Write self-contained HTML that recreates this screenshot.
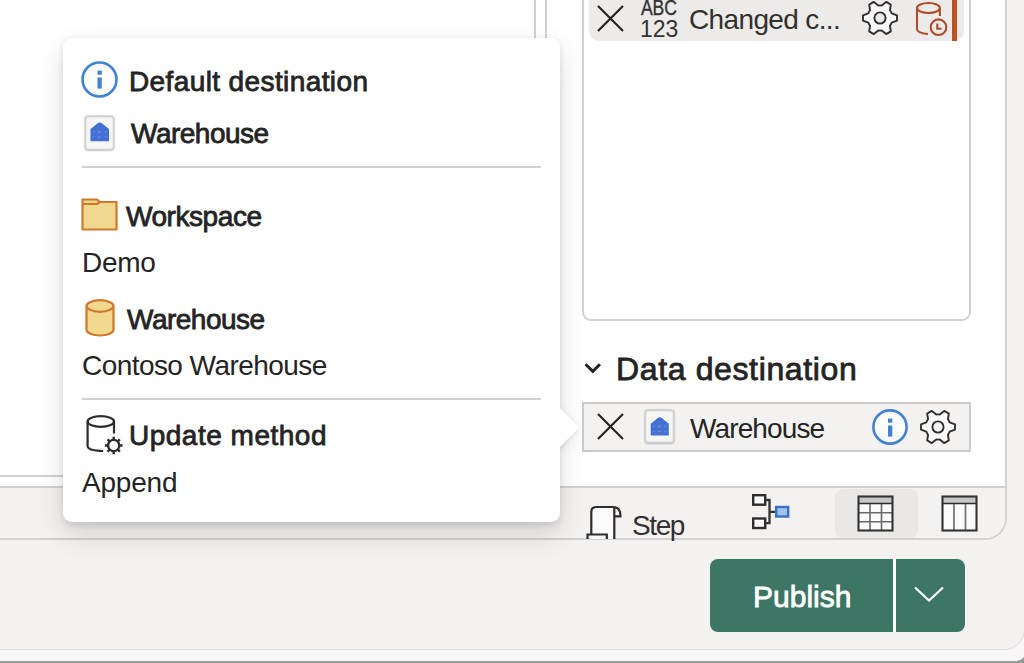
<!DOCTYPE html>
<html><head><meta charset="utf-8">
<style>
*{box-sizing:border-box;margin:0;padding:0}
html,body{width:1024px;height:663px;overflow:hidden;background:#fff;font-family:"Liberation Sans",sans-serif;color:#242424}
.a{position:absolute}
.t{position:absolute;white-space:nowrap;font-size:28px;line-height:28px}
.b{-webkit-text-stroke:0.8px currentColor}
svg{position:absolute;overflow:visible}
</style></head><body>
<!-- outer dialog background -->
<div class="a" style="left:0;top:0;width:1024px;height:663px;background:#9a9a9a"></div>
<div class="a" style="left:-10px;top:-10px;width:1036px;height:671px;background:#f7f7f7;border-bottom-right-radius:10px"></div>
<div class="a" style="left:-10px;top:-10px;width:1035px;height:660px;background:#f3f2f1;border-bottom:1.5px solid #dfdfdf;border-right:1.5px solid #dfdfdf;border-bottom-right-radius:21px"></div>
<!-- editor container -->
<div class="a" style="left:-10px;top:-10px;width:1017px;height:550px;background:#fff;border-right:2px solid #d1d1d1;border-bottom:2px solid #d1d1d1;border-bottom-right-radius:22px;overflow:hidden">
  <!-- status bar -->
  <div class="a" style="left:0;top:496px;width:1020px;height:60px;background:#f3f2f1;border-top:2px solid #d1d1d1"></div>
  <!-- left grid scroll lines -->
  <div class="a" style="left:0;top:485px;width:555px;height:2px;background:#d1d1d1"></div>
  <div class="a" style="left:544px;top:0;width:2px;height:497px;background:#d1d1d1"></div>
  <div class="a" style="left:555px;top:0;width:2px;height:497px;background:#d1d1d1"></div>
</div>

<!-- steps list panel -->
<div class="a" style="left:582px;top:-20px;width:389px;height:341px;border:2px solid #d1d1d1;border-radius:9px;background:#fff"></div>
<!-- step item -->
<div class="a" style="left:589px;top:-20px;width:375px;height:61px;background:#edebe9;border-radius:10px"></div>
<div class="a" style="left:952px;top:-10px;width:5px;height:51px;background:#bd5520"></div>
<svg style="left:597px;top:5px" width="27" height="27" viewBox="0 0 27 27"><path d="M1 1 L26 26 M26 1 L1 26" stroke="#242424" stroke-width="2.2" fill="none"/></svg>
<div class="t b" style="left:641px;top:-3px;font-size:22px;line-height:22px;letter-spacing:-0.2px;-webkit-text-stroke:0.4px #333;color:#333;transform:scaleX(0.8);transform-origin:0 0">ABC</div>
<div class="t" style="left:640px;top:17.5px;font-size:23px;line-height:23px;letter-spacing:0px;color:#333">123</div>
<div class="t" style="left:689px;top:6px;letter-spacing:-0.64px;color:#323130">Changed c...</div>
<svg style="left:861.4px;top:-0.9px" width="38" height="38" viewBox="0 0 38 38"><path d="M30.68 14.28 L35.99 16.31 L35.99 21.69 L30.68 23.72 A12.6 12.6 0 0 1 28.93 26.76 L29.82 32.37 L25.16 35.06 L20.75 31.48 A12.6 12.6 0 0 1 17.25 31.48 L12.84 35.06 L8.18 32.37 L9.07 26.76 A12.6 12.6 0 0 1 7.32 23.72 L2.01 21.69 L2.01 16.31 L7.32 14.28 A12.6 12.6 0 0 1 9.07 11.24 L8.18 5.63 L12.84 2.94 L17.25 6.52 A12.6 12.6 0 0 1 20.75 6.52 L25.16 2.94 L29.82 5.63 L28.93 11.24 A12.6 12.6 0 0 1 30.68 14.28 Z" fill="#fafafa" stroke="#303030" stroke-width="1.9" stroke-linejoin="round"/><circle cx="19" cy="19" r="5.6" fill="#edebe9" stroke="#303030" stroke-width="1.9"/></svg>
<svg style="left:915px;top:2px" width="36" height="36" viewBox="0 0 36 36"><g fill="none" stroke="#b04c28" stroke-width="2.1"><ellipse cx="13.45" cy="6" rx="11.45" ry="5"/><path d="M2 6 V27 C2 30 6.5 31.5 13 32"/><path d="M24.9 6 V14"/><circle cx="23.5" cy="25.2" r="7.8"/><path d="M22.3 21.5 V26.8 H26.5"/></g></svg>

<!-- data destination -->
<svg style="left:582px;top:360px" width="22" height="16" viewBox="0 0 22 16"><path d="M3.6 4.2 L10.8 11.4 L18 4.2" stroke="#242424" stroke-width="3" fill="none"/></svg>
<div class="t b" style="left:616px;top:353px;font-size:32px;line-height:32px;letter-spacing:0.63px">Data destination</div>
<div class="a" style="left:582px;top:402px;width:389px;height:50px;background:#f3f2f1;border:2px solid #cdcbc9"></div>
<svg style="left:597px;top:413px" width="27" height="27" viewBox="0 0 27 27"><path d="M1 1 L26 26 M26 1 L1 26" stroke="#242424" stroke-width="2.2" fill="none"/></svg>
<div class="a" style="left:646px;top:411.3px;width:27px;height:30.5px;border-radius:2.5px;background:#f6f6f6;box-shadow:inset 0 0 1px 1px rgba(0,0,0,.05),0 0 0 1.3px #cfcfcf, 0 0 1.5px 1.6px rgba(0,0,0,.14), 0 1.5px 2px rgba(0,0,0,.12)"></div>
<svg style="left:649.8px;top:417.2px" width="19.5" height="19" viewBox="0 0 20 20"><path d="M0.5 7 L8.2 0.9 Q10 -0.4 11.8 0.9 L19.5 7 V19.5 H0.5 Z" fill="#4570d3"/><g fill="#8fa8e8" opacity=".45"><rect x="3.5" y="9" width="1.5" height="2"/><rect x="8" y="9" width="3.5" height="2"/><rect x="15" y="9" width="1.5" height="2"/><rect x="3" y="14.5" width="2" height="1.5"/><rect x="8" y="14.5" width="3.5" height="1.5"/><rect x="15" y="14.5" width="2" height="1.5"/></g></svg>
<div class="t" style="left:690px;top:415px;letter-spacing:-0.875px">Warehouse</div>
<svg style="left:872px;top:409px" width="36" height="36" viewBox="0 0 36 36"><circle cx="18" cy="18" r="16.6" fill="#fafafa" stroke="#4283cf" stroke-width="2.6"/><rect x="16" y="9.6" width="4.3" height="4.1" fill="#4283cf"/><rect x="16" y="16.5" width="4.3" height="11.1" fill="#4283cf"/></svg>
<svg style="left:919px;top:407.5px" width="38" height="38" viewBox="0 0 38 38"><path d="M30.68 14.28 L35.99 16.31 L35.99 21.69 L30.68 23.72 A12.6 12.6 0 0 1 28.93 26.76 L29.82 32.37 L25.16 35.06 L20.75 31.48 A12.6 12.6 0 0 1 17.25 31.48 L12.84 35.06 L8.18 32.37 L9.07 26.76 A12.6 12.6 0 0 1 7.32 23.72 L2.01 21.69 L2.01 16.31 L7.32 14.28 A12.6 12.6 0 0 1 9.07 11.24 L8.18 5.63 L12.84 2.94 L17.25 6.52 A12.6 12.6 0 0 1 20.75 6.52 L25.16 2.94 L29.82 5.63 L28.93 11.24 A12.6 12.6 0 0 1 30.68 14.28 Z" fill="#fafafa" stroke="#303030" stroke-width="1.9" stroke-linejoin="round"/><circle cx="19" cy="19" r="5.6" fill="#f3f2f1" stroke="#303030" stroke-width="1.9"/></svg>

<!-- status bar buttons -->
<div class="a" style="left:582px;top:488px;width:50px;height:51px;overflow:hidden">
<svg style="left:0px;top:18px" width="40" height="40" viewBox="0 0 40 40"><path d="M9.3 28.5 V6 Q9.3 1 14.3 1 H32.3 V40 H9.3 Z" fill="#fafafa"/><path d="M9.3 28.5 V6 Q9.3 1 14.3 1 H30.5 Q38.4 1 38.4 9 V10.3 H32.3 M32.3 1.5 V40 M5.5 40 V28.5 H24.8 V40" fill="none" stroke="#2e2e2e" stroke-width="2.2"/></svg>
</div>
<div class="t" style="left:632px;top:512px;letter-spacing:-1.4px;color:#323130">Step</div>
<svg style="left:752px;top:494px" width="38" height="36" viewBox="0 0 38 36"><g stroke="#2e2e2e" stroke-width="2.4" fill="#fafafa"><rect x="1.2" y="1.2" width="12" height="9.5"/><rect x="1.2" y="24.5" width="12" height="9.5"/></g><path d="M13.2 6 H17.5 V29.2 H13.2 M17.5 17.8 H23" fill="none" stroke="#333" stroke-width="2.3"/><rect x="24.2" y="13" width="12" height="9.5" fill="#9ec3ee" stroke="#3a6fc4" stroke-width="2.4"/></svg>
<div class="a" style="left:835px;top:489px;width:83px;height:49px;background:#e9e8e7;border-radius:8px"></div>
<svg style="left:857.3px;top:494.5px" width="38" height="38" viewBox="0 0 38 38"><rect x="1.5" y="1.5" width="34" height="34" fill="#fafafa"/><rect x="1.5" y="1.5" width="34" height="7" fill="#c6c6c6"/><path d="M13 8.5 V36 M24.5 8.5 V36 M1.5 17.8 H35.5 M1.5 26.8 H35.5" stroke="#6a6a6a" stroke-width="1.6"/><rect x="1.5" y="1.5" width="34" height="34" fill="none" stroke="#333" stroke-width="2.1"/><path d="M1.5 8.5 H35.5" stroke="#2e2e2e" stroke-width="1.6"/></svg>
<svg style="left:940.5px;top:494.5px" width="38" height="38" viewBox="0 0 38 38"><rect x="1.5" y="1.5" width="34" height="34" fill="#fafafa"/><rect x="1.5" y="1.5" width="34" height="7" fill="#c6c6c6"/><path d="M13 8.5 V36 M24.5 8.5 V36" stroke="#707070" stroke-width="1.7"/><rect x="1.5" y="1.5" width="34" height="34" fill="none" stroke="#333" stroke-width="2.1"/><path d="M1.5 8.5 H35.5" stroke="#2e2e2e" stroke-width="1.6"/></svg>

<!-- publish button -->
<div class="a" style="left:710px;top:559px;width:255px;height:73px;background:#3d7664;border-radius:8px"></div>
<div class="a" style="left:893px;top:559px;width:3px;height:73px;background:#fff"></div>
<div class="t b" style="left:753px;top:582px;font-size:30px;line-height:30px;letter-spacing:0px;color:#fff">Publish</div>
<svg style="left:914px;top:586px" width="30" height="16" viewBox="0 0 30 16"><path d="M1 1.5 L15 14.5 L29 1.5" stroke="#fff" stroke-width="2.2" fill="none"/></svg>

<!-- popover -->
<div class="a" style="left:63px;top:38px;width:497px;height:484px;background:#fff;border-radius:9px;box-shadow:0 12.8px 28.8px rgba(0,0,0,.13),0 2.4px 7.2px rgba(0,0,0,.11)"></div>
<div class="a" style="left:560px;top:390px;width:40px;height:70px;overflow:hidden">
  <div class="a" style="left:-13.5px;top:23.5px;width:27px;height:27px;background:#fff;transform:rotate(45deg);box-shadow:0 6px 14px rgba(0,0,0,.13),0 1px 4px rgba(0,0,0,.11)"></div>
</div>

<svg style="left:81px;top:61px" width="37" height="37" viewBox="0 0 37 37"><circle cx="18.5" cy="18.5" r="17" fill="#fafafa" stroke="#4283cf" stroke-width="2.6"/><rect x="16.5" y="9.6" width="4.3" height="4.1" fill="#4283cf"/><rect x="16.5" y="16.5" width="4.3" height="11.1" fill="#4283cf"/></svg>
<div class="t b" style="left:129px;top:68px;letter-spacing:0.39px">Default destination</div>

<div class="a" style="left:86px;top:116.5px;width:26.5px;height:32px;border-radius:2.5px;background:#f6f6f6;box-shadow:inset 0 0 1px 1px rgba(0,0,0,.05),0 0 0 1.3px #cfcfcf, 0 0 1.5px 1.6px rgba(0,0,0,.14), 0 1.5px 2px rgba(0,0,0,.12)"></div>
<svg style="left:90.4px;top:122.4px" width="19.5" height="19.8" viewBox="0 0 20 20"><path d="M0.5 7 L8.2 0.9 Q10 -0.4 11.8 0.9 L19.5 7 V19.5 H0.5 Z" fill="#4570d3"/><g fill="#8fa8e8" opacity=".45"><rect x="3.5" y="9" width="1.5" height="2"/><rect x="8" y="9" width="3.5" height="2"/><rect x="15" y="9" width="1.5" height="2"/><rect x="3" y="14.5" width="2" height="1.5"/><rect x="8" y="14.5" width="3.5" height="1.5"/><rect x="15" y="14.5" width="2" height="1.5"/></g></svg>
<div class="t b" style="left:131px;top:120px;letter-spacing:-0.5px">Warehouse</div>

<div class="a" style="left:82px;top:166px;width:459px;height:2px;background:#d1d1d1"></div>

<svg style="left:81px;top:198px" width="38" height="33" viewBox="0 0 38 33"><path d="M1.5 1.5 H16 L19 4 H35.5 V31.5 H1.5 Z" fill="#f0d98f" stroke="#d0782c" stroke-width="2.2" stroke-linejoin="round"/><path d="M1.5 6 H16 L19 4" fill="none" stroke="#d0782c" stroke-width="2.2"/></svg>
<div class="t b" style="left:126px;top:203px;letter-spacing:-0.44px">Workspace</div>
<div class="t" style="left:82px;top:249px;letter-spacing:-0.33px">Demo</div>

<svg style="left:85px;top:299px" width="30" height="38" viewBox="0 0 30 38"><path d="M1.5 7 V30.5 C1.5 34 7 36.5 15 36.5 C23 36.5 28.5 34 28.5 30.5 V7" fill="#f0d98f" stroke="#d0782c" stroke-width="2.2"/><ellipse cx="15" cy="7" rx="13.5" ry="5.8" fill="#f0d98f" stroke="#d0782c" stroke-width="2.2"/></svg>
<div class="t b" style="left:127px;top:306px;letter-spacing:-0.5px">Warehouse</div>
<div class="t" style="left:82px;top:352px;letter-spacing:-0.56px">Contoso Warehouse</div>

<div class="a" style="left:82px;top:398px;width:459px;height:2px;background:#d1d1d1"></div>

<svg style="left:86px;top:415px" width="40" height="40" viewBox="0 0 40 40"><g fill="none" stroke="#2b2b2b" stroke-width="2.2"><ellipse cx="14.8" cy="6.5" rx="13.2" ry="5.3"/><path d="M1.6 6.5 V31 C1.6 34 7 35.8 17.2 36"/><path d="M28 6.5 V18.5"/></g><g transform="translate(27.7 30.5)"><circle r="5.6" fill="none" stroke="#2b2b2b" stroke-width="2.3"/><path d="M0 -8.8 V-5.5 M0 8.8 V5.5 M-8.8 0 H-5.5 M8.8 0 H5.5 M-6.2 -6.2 L-3.9 -3.9 M6.2 6.2 L3.9 3.9 M-6.2 6.2 L-3.9 3.9 M6.2 -6.2 L3.9 -3.9" stroke="#2b2b2b" stroke-width="2.4"/></g></svg>
<div class="t b" style="left:129px;top:422px;letter-spacing:0.5px">Update method</div>
<div class="t" style="left:82px;top:469px;letter-spacing:-0.2px">Append</div>

</body></html>
